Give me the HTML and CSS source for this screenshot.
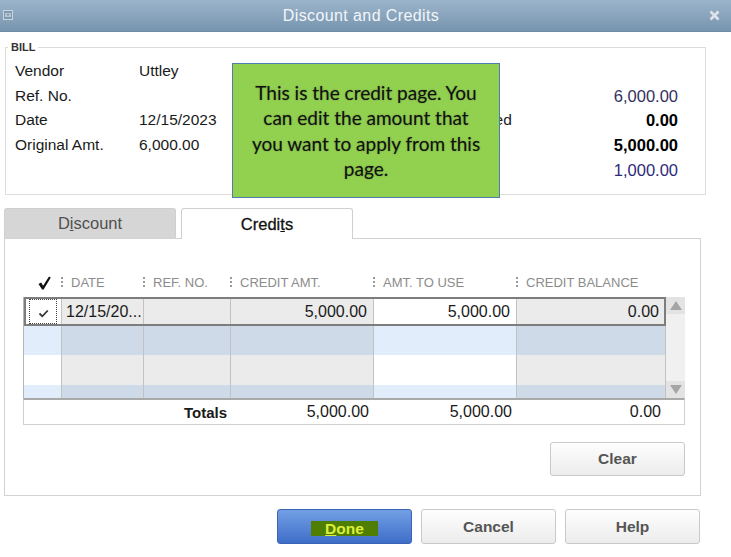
FILE: index.html
```html
<!DOCTYPE html>
<html lang="en">
<head>
    <meta charset="UTF-8">
    <title>Discount and Credits</title>
    <link rel="stylesheet" href="styles.css">
</head>
<body>
    <div class="titlebar">
        <svg class="sysicon" width="10" height="10" viewBox="0 0 10 10">
            <rect x="0.5" y="0.5" width="9" height="9" fill="#7f99b0" stroke="#c9d5df"/>
            <rect x="2" y="3" width="6" height="4" fill="#b7c6d3"/>
            <path d="M3.5 4.2 L6.5 4.2 L5 5.8 Z" fill="#6a8399"/>
        </svg>
        <div class="title">Discount and Credits</div>
        <svg class="close" width="11" height="11" viewBox="0 0 11 11">
            <path d="M1.5 1.5 L9.5 9.5 M9.5 1.5 L1.5 9.5" stroke="#dde3e8" stroke-width="2.6"/>
        </svg>
    </div>

    <fieldset class="bill">
        <legend>BILL</legend>
        <div class="bill-left">
            <span>Vendor</span><span>Uttley</span>
            <span>Ref. No.</span><span></span>
            <span>Date</span><span>12/15/2023</span>
            <span>Original Amt.</span><span>6,000.00</span>
        </div>
        <div class="bill-right">
            <span>Amount Due</span><span class="amt blue1">6,000.00</span>
            <span>Discount Used</span><span class="amt strong">0.00</span>
            <span>Credits Used</span><span class="amt strong">5,000.00</span>
            <span>Balance Due</span><span class="amt blue2">1,000.00</span>
        </div>
    </fieldset>

    <div class="tabs">
        <div class="tab tab-off">D<u>i</u>scount</div>
        <div class="tab tab-on">Credi<u>t</u>s</div>
    </div>
    <div class="panel">
        <div class="head">
            <div class="hcheck">
                <svg width="13" height="14" viewBox="0 0 13 14">
                    <path d="M0.5 8 L3.2 6.6 L5.1 9.8 L11 0.5 L12.8 1.6 L5.6 13.5 L4.1 13.5 Z" fill="#111"/>
                </svg>
            </div>
            <div class="hcell"><i class="sep"></i>DATE</div>
            <div class="hcell"><i class="sep"></i>REF. NO.</div>
            <div class="hcell"><i class="sep"></i>CREDIT AMT.</div>
            <div class="hcell"><i class="sep"></i>AMT. TO USE</div>
            <div class="hcell"><i class="sep"></i>CREDIT BALANCE</div>
        </div>
        <div class="grid">
            <div class="rows">
                <div class="row sel">
                    <div class="cell light">
                        <span class="checkbox">
                            <svg width="11" height="9" viewBox="0 0 11 9">
                                <path d="M1.5 4.5 L4.3 7.3 L9.8 1.5" stroke="#333" stroke-width="1.8" fill="none"/>
                            </svg>
                        </span>
                    </div>
                    <div class="cell">12/15/20...</div>
                    <div class="cell"></div>
                    <div class="cell num">5,000.00</div>
                    <div class="cell num light">5,000.00</div>
                    <div class="cell num">0.00</div>
                </div>
                <div class="row blue">
                    <div class="cell light"></div>
                    <div class="cell"></div>
                    <div class="cell"></div>
                    <div class="cell"></div>
                    <div class="cell light"></div>
                    <div class="cell"></div>
                </div>
                <div class="row gray">
                    <div class="cell light"></div>
                    <div class="cell"></div>
                    <div class="cell"></div>
                    <div class="cell"></div>
                    <div class="cell light"></div>
                    <div class="cell"></div>
                </div>
                <div class="row blue">
                    <div class="cell light"></div>
                    <div class="cell"></div>
                    <div class="cell"></div>
                    <div class="cell"></div>
                    <div class="cell light"></div>
                    <div class="cell"></div>
                </div>
            </div>
            <div class="scroll">
                <div class="arrow"><i class="up"></i></div>
                <div class="arrow"><i class="down"></i></div>
            </div>
        </div>
        <div class="totals">
            <div></div>
            <div></div>
            <div class="tlabel">Totals</div>
            <div class="tnum">5,000.00</div>
            <div class="tnum">5,000.00</div>
            <div class="tnum">0.00</div>
        </div>
        <div class="actions">
            <button class="btn">Clear</button>
        </div>
    </div>

    <div class="footer">
        <button class="btn btn-done"><span class="hl"><u>D</u>one</span></button>
        <button class="btn">Cancel</button>
        <button class="btn">Help</button>
    </div>

    <div class="callout">This is the credit page. You<br>can edit the amount that<br>you want to apply from this<br>page.</div>
</body>
</html>
```

FILE: styles.css
```css
body {
    margin: 0;
    width: 731px;
    height: 557px;
    overflow: hidden;
    position: relative;
    background: #fff;
    font-family: "Liberation Sans", Arial, sans-serif;
    color: #1a1a1a;
}
.titlebar {
    height: 31px;
    display: flex;
    align-items: center;
    padding: 0 11px 0 3px;
    background: linear-gradient(#9bb4ca, #7895af);
    border-bottom: 1px solid #6f8aa3;
}
.sysicon {
    display: block;
    margin-top: -2px;
}
.title {
    flex: 1;
    text-align: center;
    font-size: 16px;
    letter-spacing: 0.4px;
    color: #f3f6f9;
}
.close {
    display: block;
}
.bill {
    margin: 9px 0 0 5px;
    width: 701px;
    box-sizing: border-box;
    border: 1px solid #dcdcdc;
    padding: 5px 27px 12px 9px;
    display: flex;
    align-items: flex-start;
    font-size: 15.5px;
}
.bill legend {
    font-size: 11px;
    font-weight: bold;
    line-height: 13px;
    color: #333;
    padding: 0 3px;
    margin-left: -7px;
}
.bill-left {
    display: grid;
    grid-template-columns: 124px auto;
    line-height: 24.67px;
}
.bill-right {
    margin-left: auto;
    width: 267px;
    display: grid;
    grid-template-columns: 1fr auto;
    line-height: 24.67px;
    padding-top: 24.67px;
}
.amt {
    text-align: right;
    font-size: 16.5px;
}
.strong {
    font-weight: bold;
    color: #000;
}
.blue1 {
    color: #35305e;
}
.blue2 {
    color: #2d2b7a;
}
.tabs {
    display: flex;
    align-items: flex-end;
    gap: 5px;
    height: 30px;
    margin: 13px 0 0 4px;
}
.tab {
    width: 172px;
    height: 30px;
    box-sizing: border-box;
    border: 1px solid #cfcfcf;
    border-bottom: none;
    border-radius: 3px 3px 0 0;
    display: flex;
    align-items: center;
    justify-content: center;
    font-size: 16.5px;
}
.tab-off {
    background: #d6d6d6;
    color: #505050;
}
.tab-on {
    background: #fff;
    color: #111;
    height: 31px;
    margin-bottom: -1px;
    position: relative;
    z-index: 1;
    -webkit-text-stroke: 0.3px #111;
}
.panel {
    margin-left: 4px;
    width: 697px;
    height: 258px;
    box-sizing: border-box;
    border: 1px solid #d2d2d2;
    padding: 37px 15px 0 18px;
}
.head {
    display: grid;
    grid-template-columns: 39px 82px 87px 143px 143px 149px;
    height: 21px;
    font-size: 13px;
    line-height: 14px;
    color: #8c8c8c;
}
.hcheck {
    display: flex;
    justify-content: center;
    padding-left: 3px;
}
.hcheck svg {
    display: block;
    margin-top: 0;
}
.hcell {
    display: flex;
    align-items: flex-start;
    gap: 8px;
    margin-left: -1px;
}
.sep {
    display: block;
    width: 2px;
    height: 10px;
    margin-top: 1px;
    background: repeating-linear-gradient(#9a9a9a 0 2px, transparent 2px 4px);
}
.grid {
    display: flex;
    height: 101px;
}
.rows {
    width: 643px;
    height: 101px;
    box-sizing: border-box;
    overflow: hidden;
    border-left: 1px solid #b5b5b5;
}
.row {
    display: grid;
    grid-template-columns: 38px 82px 87px 143px 143px 149px;
    height: 29px;
}
.row.gray {
    height: 30px;
}
.cell {
    border-right: 1px solid #c2c2c2;
    display: flex;
    align-items: center;
    padding: 0 4px;
    font-size: 16px;
    background: #ebebeb;
}
.cell.num {
    justify-content: flex-end;
    padding-right: 6px;
}
.cell.light {
    background: #fff;
}
.row.blue .cell {
    background: #cedae7;
}
.row.blue .cell.light {
    background: #e1edfb;
}
.row.sel {
    outline: 2px solid #7d7d7d;
    outline-offset: -2px;
}
.checkbox {
    width: 28px;
    height: 25px;
    box-sizing: border-box;
    margin-left: 1px;
    border: 1px dotted #444;
    display: flex;
    align-items: center;
    justify-content: center;
    padding-top: 3px;
}
.checkbox svg {
    display: block;
}
.scroll {
    width: 19px;
    background: #f0f0f0;
    display: flex;
    flex-direction: column;
    justify-content: space-between;
}
.arrow {
    height: 17px;
    background: #e3e3e3;
    display: flex;
    align-items: center;
    justify-content: center;
}
.up {
    border-left: 6px solid transparent;
    border-right: 6px solid transparent;
    border-bottom: 9px solid #a5a5a5;
}
.down {
    border-left: 6px solid transparent;
    border-right: 6px solid transparent;
    border-top: 9px solid #a5a5a5;
}
.totals {
    display: grid;
    grid-template-columns: 39px 82px 87px 143px 143px 149px 19px;
    height: 27px;
    box-sizing: border-box;
    border: 1px solid #cfcfcf;
    border-top: 2px solid #a9a9a9;
    font-size: 16px;
    align-items: center;
}
.tlabel {
    text-align: right;
    font-weight: bold;
    font-size: 15px;
    padding-right: 5px;
}
.tnum {
    text-align: right;
    padding-right: 6px;
}
.actions {
    display: flex;
    justify-content: flex-end;
    margin-top: 17px;
}
.btn {
    width: 135px;
    height: 34px;
    border: 1px solid #c9c9c9;
    border-radius: 3px;
    background: linear-gradient(#fefefe, #ececec);
    font-family: inherit;
    font-weight: bold;
    font-size: 15.5px;
    color: #555;
    padding: 0;
}
.footer {
    display: flex;
    justify-content: flex-end;
    gap: 9px;
    padding-right: 31px;
    margin-top: 13px;
}
.footer .btn {
    height: 35px;
}
.btn-done {
    background: linear-gradient(#729fe4, #3f6ec9);
    border-color: #3b63b3;
}
.hl {
    display: inline-block;
    background: #4f7e00;
    color: #dcf03a;
    line-height: 15px;
    padding: 0 14px;
    margin-top: 5px;
}
.callout {
    position: absolute;
    left: 232px;
    top: 63px;
    width: 268px;
    height: 135px;
    box-sizing: border-box;
    border: 1.5px solid #4f7cae;
    background: #92d050;
    display: flex;
    align-items: center;
    justify-content: center;
    text-align: center;
    padding: 0 4px;
    font-family: Lato, "Open Sans", sans-serif;
    font-size: 19px;
    line-height: 25.3px;
    color: #111;
    text-shadow: 0 0 1.5px rgba(0, 0, 0, 0.35);
    z-index: 5;
}
```
